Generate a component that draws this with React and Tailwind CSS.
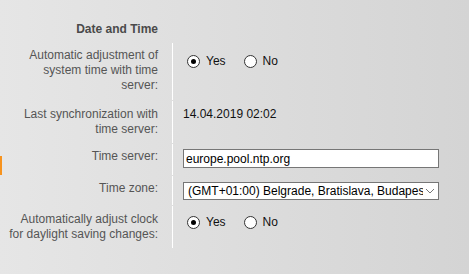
import React from 'react';

const Radio = ({ checked, label }) => (
    <span className="flex items-center">
        <span className="flex h-[13px] w-[13px] items-center justify-center rounded-full border border-[#333] bg-white">
            {checked && <span className="h-[5px] w-[5px] rounded-full bg-black" />}
        </span>
        <span className="ml-[6px] text-[#111]">{label}</span>
    </span>
);

const YesNo = () => (
    <div className="flex items-center gap-[18px] pl-[4px]">
        <Radio checked label="Yes" />
        <Radio label="No" />
    </div>
);

const Row = ({ label, height, labelPad, valuePad, children }) => (
    <div className="flex" style={{ height }}>
        <div className="w-[172px] shrink-0 pr-[14px] text-right text-[#555]" style={{ paddingTop: labelPad }}>
            {label}
        </div>
        <div className="flex-1 border-l border-white pl-[10px]" style={{ paddingTop: valuePad }}>
            {children}
        </div>
    </div>
);

const App = () => {
    return (
        <div
            className="relative h-[274px] w-[469px] overflow-hidden bg-linear-to-r from-[#e6e6e6] to-[#d4d4d4] text-[12px] leading-[15px]"
            style={{ fontFamily: '"Liberation Sans", Arial, sans-serif' }}
        >
            <div className="absolute left-0 top-[156px] h-[19px] w-[2px] bg-[#f7931e]" />

            <div className="flex h-[43px] w-[172px] justify-end pr-[14px] pt-[22px]">
                <span className="font-bold text-[#4a4a4a]">Date and Time</span>
            </div>

            <div className="flex flex-col gap-y-px">
                <Row
                    height={57}
                    labelPad={5}
                    valuePad={11}
                    label={<>Automatic adjustment of<br />system time with time<br />server:</>}
                >
                    <YesNo />
                </Row>
                <Row
                    height={42}
                    labelPad={6}
                    valuePad={6}
                    label={<>Last synchronization with<br />time server:</>}
                >
                    <span className="text-[#111]">14.04.2019 02:02</span>
                </Row>
                <Row height={31} labelPad={5} valuePad={5} label="Time server:">
                    <input
                        readOnly
                        value="europe.pool.ntp.org"
                        className="block h-[19px] w-[256px] border border-[#767676] bg-white px-[2px] text-[12px] text-black outline-none"
                    />
                </Row>
                <Row height={29} labelPad={5} valuePad={6} label="Time zone:">
                    <div className="flex h-[18px] w-[256px] items-center border border-[#767676] bg-white pl-[4px] pr-[3px]">
                        <span className="flex-1 overflow-hidden whitespace-nowrap text-black">
                            (GMT+01:00) Belgrade, Bratislava, Budapest
                        </span>
                        <svg width="10" height="6" viewBox="0 0 10 6" className="ml-[2px] shrink-0">
                            <path d="M1 1 L5 5 L9 1" fill="none" stroke="#777" strokeWidth="1" />
                        </svg>
                    </div>
                </Row>
                <Row
                    height={42}
                    labelPad={6}
                    valuePad={9}
                    label={<>Automatically adjust clock<br />for daylight saving changes:</>}
                >
                    <YesNo />
                </Row>
            </div>
        </div>
    );
};

export default App;
